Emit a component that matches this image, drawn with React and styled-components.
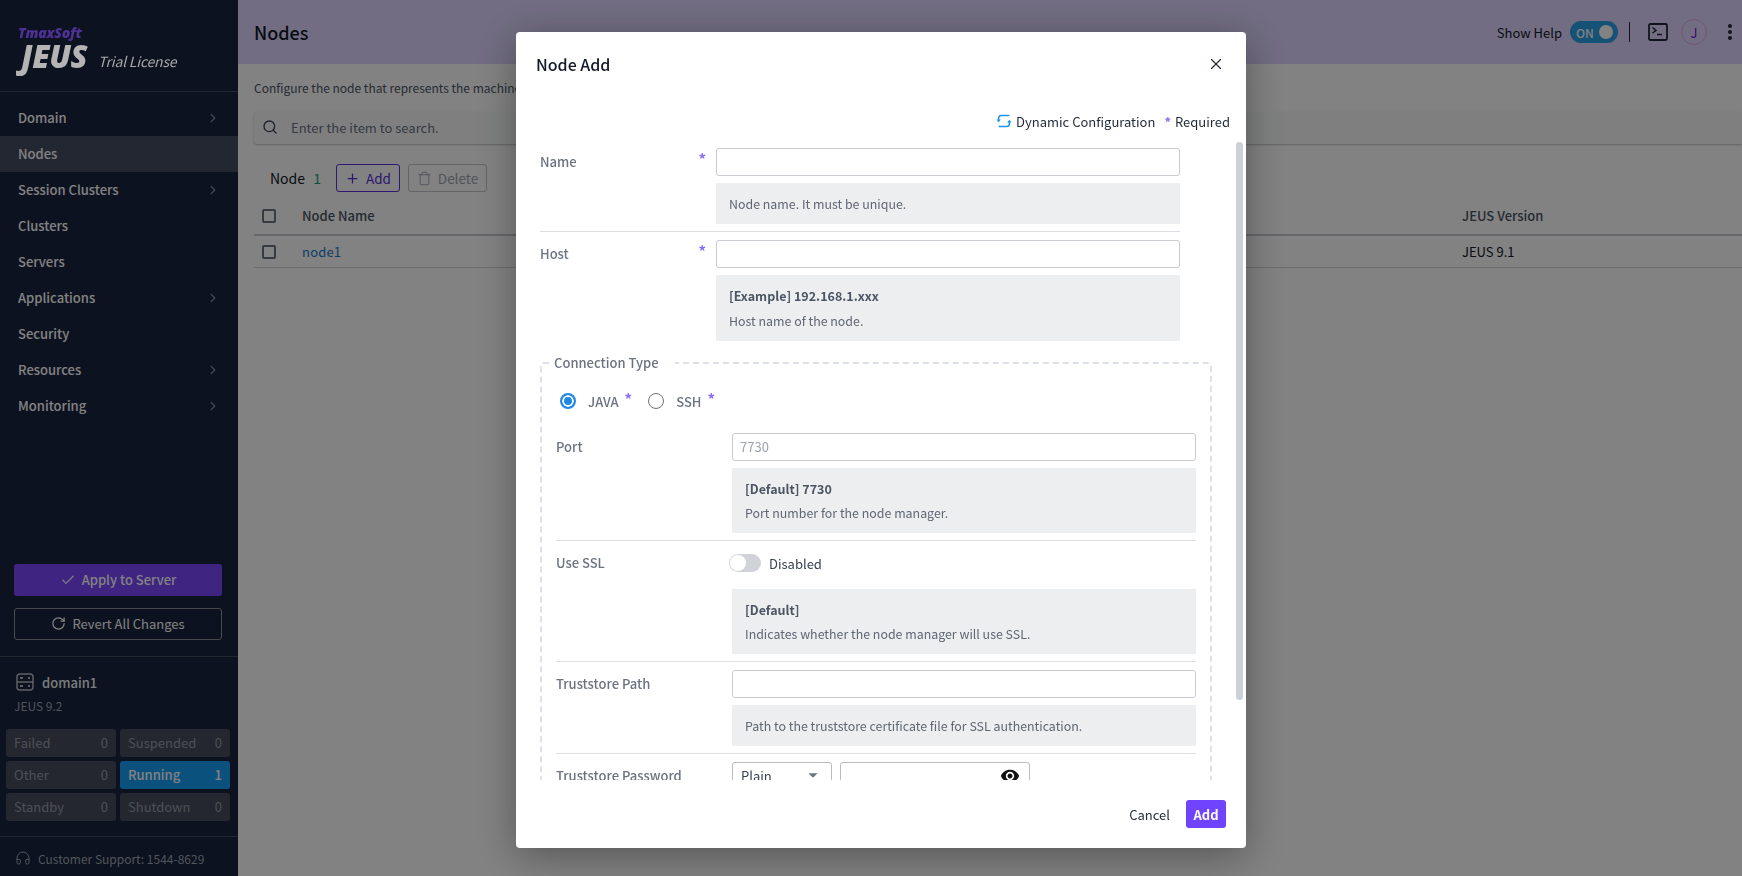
import React from 'react'
import styled, { createGlobalStyle } from 'styled-components'
import { ChevronRight, Search, Plus, Trash, Check, RotateCw, Headphones, X } from 'lucide-react'
import { MdMoreVert, MdVisibility, MdArrowDropDown } from 'react-icons/md'

const GlobalStyle = createGlobalStyle`
  html, body { margin: 0; height: 100%; overflow: hidden; }
  body { font-family: "Noto Sans CJK KR", "Noto Sans", sans-serif; font-size: 13px; color: #1f2937; background: #fff; }
  * { box-sizing: border-box; }
`

const menu = [
  { label: 'Domain', arrow: true },
  { label: 'Nodes', active: true },
  { label: 'Session Clusters', arrow: true },
  { label: 'Clusters' },
  { label: 'Servers' },
  { label: 'Applications', arrow: true },
  { label: 'Security' },
  { label: 'Resources', arrow: true },
  { label: 'Monitoring', arrow: true },
]

const statuses = [
  ['Failed', 0], ['Suspended', 0], ['Other', 0], ['Running', 1], ['Standby', 0], ['Shutdown', 0],
]

function TerminalIcon() {
  return (
    <svg width="20" height="18" viewBox="0 0 20 18" fill="none" stroke="#1f2937" strokeWidth="1.8">
      <rect x="1" y="1" width="18" height="16" rx="1.5" />
      <path d="M4.5 4.5 8 7.5 4.5 10" strokeWidth="1.5" />
      <path d="M9 11.5h5" strokeWidth="1.5" />
    </svg>
  )
}

function DomainIcon() {
  return (
    <svg width="18" height="18" viewBox="0 0 18 18" fill="none" stroke="#b8bcc4" strokeWidth="1.5">
      <rect x="1" y="1" width="16" height="16" rx="3" />
      <path d="M1 9h16" />
      <path d="M4 5h3M4 13h3M12 5h2M12 13h2" strokeWidth="1.8" />
    </svg>
  )
}

function DynamicIcon() {
  return (
    <svg width="16" height="16" viewBox="0 0 16 16" fill="none" stroke="#1e96f0" strokeWidth="1.5">
      <path d="M2.6 8V5.2C2.6 3.6 3.8 2.4 5.4 2.4h8" />
      <path d="M13.4 8v2.8c0 1.6-1.2 2.8-2.8 2.8h-8" />
      <path d="M.4 6.6 2.6 9.2l2.2-2.6z" fill="#1e96f0" stroke="none" />
      <path d="M11.2 9.4l2.2-2.6 2.2 2.6z" fill="#1e96f0" stroke="none" />
    </svg>
  )
}

function Field({ label, required, children, last }) {
  return (
    <Row $last={last}>
      <RowLabel>
        <span>{label}</span>
        {required && <Star>*</Star>}
      </RowLabel>
      <RowBody>{children}</RowBody>
    </Row>
  )
}

function Help({ strong, children }) {
  return (
    <HelpBox>
      {strong && <HelpStrong>{strong}</HelpStrong>}
      <div>{children}</div>
    </HelpBox>
  )
}

export default function App() {
  return (
    <Page>
      <GlobalStyle />
      <Sidebar>
        <Logo>
          <LogoMaker>TmaxSoft</LogoMaker>
          <LogoLine>
            <LogoName>JEUS</LogoName>
            <LogoLicense>Trial License</LogoLicense>
          </LogoLine>
        </Logo>
        <Menu>
          {menu.map((m) => (
            <MenuItem key={m.label} $active={m.active}>
              <MenuText>{m.label}</MenuText>
              {m.arrow && <ChevronRight size={14} color="#8d929c" />}
            </MenuItem>
          ))}
        </Menu>
        <SideActions>
          <ApplyButton><Check size={16} strokeWidth={1.6} />Apply to Server</ApplyButton>
          <RevertButton><RotateCw size={15} strokeWidth={2} />Revert All Changes</RevertButton>
        </SideActions>
        <DomainBox>
          <DomainName><DomainIcon />domain1</DomainName>
          <DomainVersion>JEUS 9.2</DomainVersion>
          <StatusGrid>
            {statuses.map(([name, count]) => (
              <StatusCell key={name} $on={count > 0}>
                <span>{name}</span>
                <span>{count}</span>
              </StatusCell>
            ))}
          </StatusGrid>
        </DomainBox>
        <Support><Headphones size={16} strokeWidth={1.5} />Customer Support: 1544-8629</Support>
      </Sidebar>

      <Main>
        <TopBar>
          <PageTitle>Nodes</PageTitle>
          <TopTools>
            <span>Show Help</span>
            <HelpToggle>ON<HelpKnob /></HelpToggle>
            <ToolDivider />
            <TerminalIcon />
            <Avatar>J</Avatar>
            <MdMoreVert size={24} color="#1f2937" />
          </TopTools>
        </TopBar>
        <Content>
          <Description>Configure the node that represents the machine on which the servers run.</Description>
          <SearchBar>
            <Search size={16} color="#374151" />
            Enter the item to search.
          </SearchBar>
          <TableTools>
            <TableTitle>Node <Count>1</Count></TableTitle>
            <AddButton><Plus size={15} />Add</AddButton>
            <DeleteButton><Trash size={15} strokeWidth={1.5} />Delete</DeleteButton>
          </TableTools>
          <TableHead>
            <Checkbox />
            <span>Node Name</span>
            <span>JEUS Version</span>
          </TableHead>
          <TableRow>
            <Checkbox />
            <NodeLink>node1</NodeLink>
            <span>JEUS 9.1</span>
          </TableRow>
        </Content>
      </Main>

      <Overlay>
        <Modal>
          <ModalHead>
            <ModalTitle>Node Add</ModalTitle>
            <X size={18} strokeWidth={1.5} color="#1f2937" />
          </ModalHead>
          <Legend>
            <DynamicIcon />
            <span>Dynamic Configuration</span>
            <LegendStar>*</LegendStar>
            <span>Required</span>
          </Legend>
          <BodyFrame>
            <ModalBody>
              <Field label="Name" required>
                <TextInput />
                <Help>Node name. It must be unique.</Help>
              </Field>
              <Field label="Host" required last>
                <TextInput />
                <Help strong="[Example] 192.168.1.xxx">Host name of the node.</Help>
              </Field>
              <Group>
                <GroupTitle>Connection Type</GroupTitle>
                <RadioRow>
                  <Radio $on />
                  <RadioLabel>JAVA</RadioLabel>
                  <RadioStar>*</RadioStar>
                  <Radio />
                  <RadioLabel>SSH</RadioLabel>
                  <RadioStar>*</RadioStar>
                </RadioRow>
                <Field label="Port">
                  <TextInput placeholder="7730" />
                  <Help strong="[Default] 7730">Port number for the node manager.</Help>
                </Field>
                <Field label="Use SSL">
                  <SwitchLine>
                    <Switch />
                    Disabled
                  </SwitchLine>
                  <Help strong="[Default]">Indicates whether the node manager will use SSL.</Help>
                </Field>
                <Field label="Truststore Path">
                  <TextInput />
                  <Help>Path to the truststore certificate file for SSL authentication.</Help>
                </Field>
                <Field label="Truststore Password" last>
                  <PasswordLine>
                    <SelectBox>Plain<MdArrowDropDown size={22} color="#6b7280" /></SelectBox>
                    <PasswordBox><MdVisibility size={20} color="#111" /></PasswordBox>
                  </PasswordLine>
                  <Help>Password of the truststore file.</Help>
                </Field>
              </Group>
            </ModalBody>
            <ScrollThumb />
          </BodyFrame>
          <ModalFoot>
            <CancelButton>Cancel</CancelButton>
            <SubmitButton>Add</SubmitButton>
          </ModalFoot>
        </Modal>
      </Overlay>
    </Page>
  )
}

const Page = styled.div`
  display: flex;
  width: 100%;
  height: 100vh;
  overflow: hidden;
`

const Sidebar = styled.aside`
  width: 238px;
  flex: none;
  display: flex;
  flex-direction: column;
  background: #18243e;
  color: #fff;
`

/* the logo keeps its brightness above the dimmed backdrop */
const Logo = styled.div`
  position: relative;
  z-index: 2;
  height: 92px;
  padding: 25px 18px 0;
  border-bottom: 1px solid #22262f;
  font-style: italic;
`

const LogoMaker = styled.div`
  font-family: "Open Sans", sans-serif;
  font-weight: 800;
  font-size: 14px;
  line-height: 16px;
  letter-spacing: -0.2px;
  color: #4d3194;
`

const LogoLine = styled.div`
  display: flex;
  align-items: baseline;
  gap: 11px;
`

const LogoName = styled.div`
  margin-left: 3px;
  font-family: "Open Sans", sans-serif;
  font-weight: 800;
  font-size: 31px;
  line-height: 30px;
  letter-spacing: -0.4px;
  color: #b4b4b4;
`

const LogoLicense = styled.div`
  position: relative;
  top: -1px;
  font-size: 14px;
  font-weight: 400;
  letter-spacing: -0.2px;
  color: #a8a8a8;
`

const Menu = styled.nav`
  padding-top: 8px;
  flex: 1;
`

const MenuItem = styled.div`
  height: 36px;
  padding: 0 18px;
  display: flex;
  align-items: center;
  justify-content: space-between;
  font-weight: 500;
  font-size: 13px;
  color: #fff;
  background: ${(p) => (p.$active ? '#444d60' : 'transparent')};
`

const MenuText = styled.span`
  padding-bottom: 2px;
`

const SideActions = styled.div`
  display: flex;
  flex-direction: column;
  gap: 12px;
  padding: 0 16px 16px 14px;
  border-bottom: 1px solid #454c5c;
`

const ApplyButton = styled.div`
  height: 32px;
  padding-bottom: 1px;
  border-radius: 3px;
  background: #7c47ff;
  display: flex;
  align-items: center;
  justify-content: center;
  gap: 6px;
  font-weight: 500;
  color: #fff;
`

const RevertButton = styled.div`
  height: 32px;
  padding-bottom: 1px;
  border: 1px solid #8b8f98;
  border-radius: 3px;
  display: flex;
  align-items: center;
  justify-content: center;
  gap: 6px;
  color: #fff;
`

const DomainBox = styled.div`
  padding: 14px 8px 15px 6px;
  border-bottom: 1px solid #454c5c;
`

const DomainName = styled.div`
  display: flex;
  align-items: center;
  gap: 8px;
  margin-left: 10px;
  height: 22px;
  font-weight: 500;
  color: #f3f4f6;
`

const DomainVersion = styled.div`
  margin: 3px 0 13px 8px;
  height: 20px;
  font-size: 12px;
  line-height: 20px;
  color: #a0a6b2;
`

const StatusGrid = styled.div`
  display: grid;
  grid-template-columns: 110px 110px;
  gap: 4px;
`

const StatusCell = styled.div`
  height: 28px;
  padding: 0 8px 1px;
  border-radius: 3px;
  display: flex;
  align-items: center;
  justify-content: space-between;
  font-size: 13px;
  font-weight: ${(p) => (p.$on ? 500 : 400)};
  color: ${(p) => (p.$on ? '#fff' : '#969ca8')};
  background: ${(p) => (p.$on ? '#17a0f5' : '#474e5e')};
`

const Support = styled.div`
  height: 39px;
  padding: 3px 0 0 15px;
  display: flex;
  align-items: center;
  gap: 7px;
  font-size: 12px;
  color: #a0a6b2;
`

const Main = styled.main`
  flex: 1;
  min-width: 0;
`

const TopBar = styled.header`
  height: 64px;
  padding: 0 0 0 16px;
  display: flex;
  align-items: center;
  justify-content: space-between;
  background: #dfd6ff;
`

const PageTitle = styled.h1`
  margin: 0;
  font-size: 18px;
  font-weight: 500;
  color: #111827;
`

const TopTools = styled.div`
  display: flex;
  align-items: center;
  font-size: 13px;
  color: #111827;

  svg:last-child { margin-left: 11px; }
`

const HelpToggle = styled.div`
  width: 48px;
  height: 22px;
  margin-left: 8px;
  padding: 0 5px 0 6px;
  border-radius: 11px;
  background: #2b9fe8;
  display: flex;
  align-items: center;
  justify-content: space-between;
  font-size: 12px;
  font-weight: 500;
  color: #fff;
`

const HelpKnob = styled.i`
  width: 14px;
  height: 14px;
  border-radius: 50%;
  background: #fff;
`

const ToolDivider = styled.i`
  width: 1px;
  height: 20px;
  margin: 0 18px 0 11px;
  background: #1f2937;
`

const Avatar = styled.div`
  width: 26px;
  height: 26px;
  margin-left: 13px;
  border: 1px solid #d9a9e0;
  border-radius: 50%;
  display: flex;
  align-items: center;
  justify-content: center;
  font-size: 13px;
  color: #6d28d9;
`

const Content = styled.div`
  padding-left: 16px;
`

const Description = styled.p`
  margin: 0;
  padding-top: 14px;
  height: 48px;
  font-size: 12px;
  line-height: 20px;
  color: #4b5563;
`

const SearchBar = styled.div`
  height: 32px;
  padding: 0 0 2px 8px;
  display: flex;
  align-items: center;
  gap: 13px;
  border-radius: 3px 0 0 3px;
  background: #f9fafb;
  box-shadow: 0 1px 2px rgba(0, 0, 0, 0.25);
  color: #6b7280;
`

const TableTools = styled.div`
  display: flex;
  align-items: center;
  height: 28px;
  margin-top: 20px;
  padding-left: 16px;
`

const TableTitle = styled.div`
  width: 66px;
  font-size: 14px;
  color: #111827;
`

const Count = styled.span`
  margin-left: 5px;
  color: #0f9d7a;
`

const AddButton = styled.div`
  width: 64px;
  height: 28px;
  border: 1px solid #5b2ee0;
  border-radius: 3px;
  display: flex;
  align-items: center;
  justify-content: center;
  gap: 6px;
  font-size: 13.5px;
  color: #5b2ee0;
`

const DeleteButton = styled.div`
  width: 79px;
  height: 28px;
  margin-left: 8px;
  border: 1px solid #c4c7cc;
  border-radius: 3px;
  display: flex;
  align-items: center;
  justify-content: center;
  gap: 6px;
  font-size: 13.5px;
  color: #9ca3af;
`

const TableHead = styled.div`
  display: grid;
  grid-template-columns: 48px 1fr 280px;
  align-items: center;
  height: 44px;
  padding-top: 6px;
  border-bottom: 2px solid #c7cad0;
  font-weight: 500;
  color: #4b5563;

  span { position: relative; top: -1px; }
`

const TableRow = styled.div`
  display: grid;
  grid-template-columns: 48px 1fr 280px;
  align-items: center;
  height: 32px;
  border-bottom: 1px solid #d1d5db;
  color: #111827;
`

const Checkbox = styled.i`
  display: block;
  width: 14px;
  height: 14px;
  margin-left: 8px;
  border: 2px solid #6b7280;
  border-radius: 2px;
`

const NodeLink = styled.a`
  color: #1479c4;
  letter-spacing: 0.2px;
`

const Overlay = styled.div`
  position: fixed;
  z-index: 1;
  inset: 0;
  padding: 32px 0 0 20px;
  display: flex;
  justify-content: center;
  background: rgba(0, 0, 0, 0.49);
`

const Modal = styled.section`
  width: 730px;
  height: 816px;
  border-radius: 4px;
  display: flex;
  flex-direction: column;
  background: #fff;
  box-shadow: 0 8px 40px rgba(0, 0, 0, 0.35);
`

const ModalHead = styled.div`
  height: 70px;
  padding: 0 21px 6px 20px;
  display: flex;
  align-items: center;
  justify-content: space-between;
`

const ModalTitle = styled.h2`
  margin: 0;
  font-size: 16px;
  font-weight: 500;
  color: #111827;
`

const Legend = styled.div`
  height: 38px;
  padding: 0 16px 0 0;
  display: flex;
  align-items: center;
  justify-content: flex-end;
  font-size: 13px;
  color: #1f2937;

  svg { margin-right: 4px; }
`

const LegendStar = styled.span`
  margin: 0 4px 0 9px;
  font-weight: 700;
  color: #8b6cf6;
`

const BodyFrame = styled.div`
  position: relative;
  flex: 1;
  min-height: 0;
`

const ModalBody = styled.div`
  height: 100%;
  padding: 8px 0 0 24px;
  overflow: hidden;
`

const ScrollThumb = styled.i`
  position: absolute;
  top: 2px;
  right: 3px;
  width: 7px;
  height: 558px;
  border-radius: 4px;
  background: #cbd0d9;
`

const Row = styled.div`
  width: 640px;
  display: flex;
  padding-bottom: ${(p) => (p.$last ? '0' : '7px')};
  margin-bottom: ${(p) => (p.$last ? '0' : '8px')};
  border-bottom: ${(p) => (p.$last ? 'none' : '1px solid #dcdfe4')};
`

const RowLabel = styled.div`
  width: 176px;
  padding: 0 10px 2px 0;
  flex: none;
  height: 28px;
  display: flex;
  align-items: center;
  justify-content: space-between;
  font-size: 13px;
  font-weight: 500;
  white-space: nowrap;
  color: #6b7280;
`

const Star = styled.span`
  align-self: flex-start;
  margin-top: 1px;
  font-size: 15px;
  font-weight: 700;
  line-height: 20px;
  color: #8b6cf6;
`

const RowBody = styled.div`
  flex: 1;
  min-width: 0;
  display: flex;
  flex-direction: column;
  gap: 7px;
`

const TextInput = styled.input`
  width: 100%;
  height: 28px;
  padding: 0 7px 2px;
  border: 1px solid #c9ccd2;
  border-radius: 3px;
  outline: none;
  font: inherit;
  font-size: 13px;
  &::placeholder { color: #9ca3af; }
`

const HelpBox = styled.div`
  padding: 9px 13px 8px;
  background: #edeef0;
  font-size: 12.4px;
  line-height: 24px;
  color: #5f6773;
`

const HelpStrong = styled.div`
  margin-bottom: 1px;
  font-size: 12.5px;
  font-weight: 700;
  color: #4b5563;
`

const Group = styled.fieldset`
  width: 672px;
  margin: 12px 0 16px;
  padding: 12px 14px 16px;
  border: 2px dashed #dde1e7;
  border-radius: 3px;

  ${HelpStrong} { margin-bottom: 0; }
`

const GroupTitle = styled.legend`
  margin-left: -7px;
  padding: 0 16px 0 5px;
  font-size: 13px;
  font-weight: 500;
  line-height: 20px;
  color: #6b7280;
`

const RadioRow = styled.div`
  height: 32px;
  margin-bottom: 16px;
  padding-left: 4px;
  display: flex;
  align-items: center;
`

const Radio = styled.i`
  width: 16px;
  height: 16px;
  border-radius: 50%;
  border: ${(p) => (p.$on ? '2px solid #1e88e5' : '1.5px solid #6b7280')};
  background: ${(p) => (p.$on ? '#1e88e5' : '#fff')};
  box-shadow: ${(p) => (p.$on ? 'inset 0 0 0 2px #fff' : 'none')};
`

const RadioLabel = styled.span`
  margin-left: 12px;
  font-size: 13px;
  font-weight: 500;
  color: #6b7280;
`

const RadioStar = styled.span`
  align-self: flex-start;
  margin: 3px 16px 0 6px;
  font-size: 15px;
  font-weight: 700;
  color: #8b6cf6;
`

const SwitchLine = styled.div`
  height: 28px;
  margin-bottom: 5px;
  margin-left: -3px;
  display: flex;
  align-items: center;
  gap: 8px;
  font-size: 13px;
  color: #374151;
`

const Switch = styled.i`
  position: relative;
  width: 32px;
  height: 18px;
  border-radius: 9px;
  background: #d1d3d8;

  &::after {
    content: "";
    position: absolute;
    left: 1px;
    top: 1px;
    width: 16px;
    height: 16px;
    border-radius: 50%;
    background: #fff;
  }
`

const PasswordLine = styled.div`
  display: flex;
  gap: 8px;
`

const SelectBox = styled.div`
  width: 100px;
  height: 28px;
  padding: 0 7px 2px 8px;
  border: 1px solid #b9bcc2;
  border-radius: 3px;
  display: flex;
  align-items: center;
  justify-content: space-between;
  color: #374151;
`

const PasswordBox = styled.div`
  width: 190px;
  height: 28px;
  padding-right: 9px;
  border: 1px solid #b9bcc2;
  border-radius: 3px;
  display: flex;
  align-items: center;
  justify-content: flex-end;
`

const ModalFoot = styled.div`
  height: 68px;
  padding: 0 20px 0 0;
  display: flex;
  align-items: center;
  justify-content: flex-end;
  gap: 16px;
`

const CancelButton = styled.div`
  font-size: 13px;
  color: #1f2937;
`

const SubmitButton = styled.div`
  width: 40px;
  height: 28px;
  border-radius: 3px;
  background: #7044ff;
  display: flex;
  align-items: center;
  justify-content: center;
  font-size: 13px;
  font-weight: 700;
  color: #fff;
`
